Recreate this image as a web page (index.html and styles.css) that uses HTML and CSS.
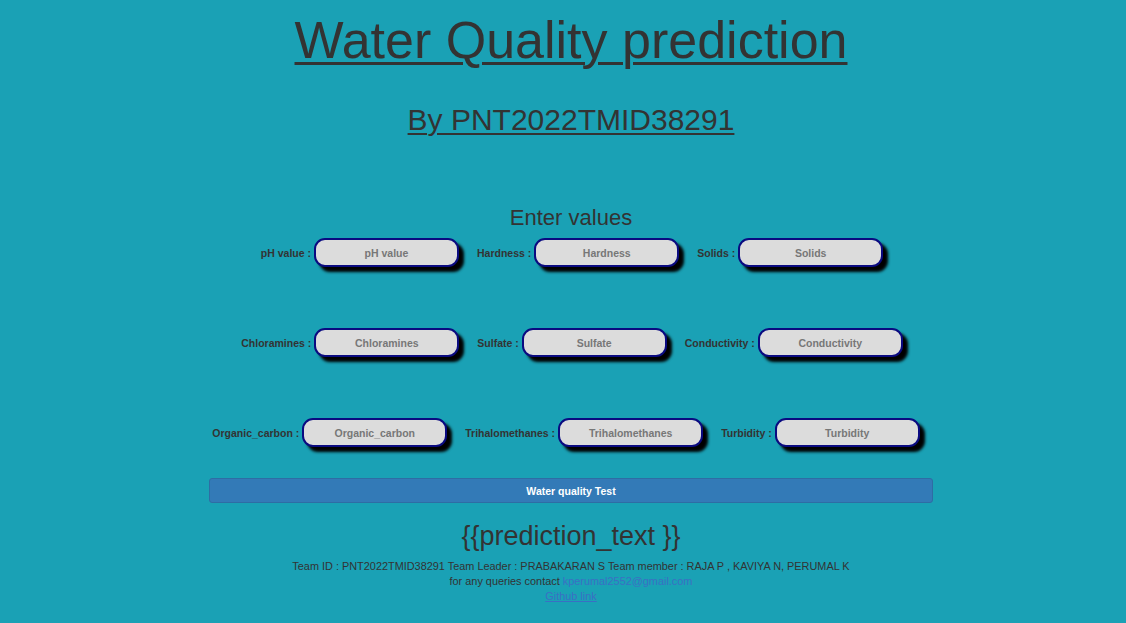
FILE: index.html
```html
<!DOCTYPE html>
<html>
<head>
<meta charset="utf-8">
<title>Water Quality prediction</title>
<link rel="stylesheet" href="styles.css">
</head>
<body>
<div class="page">
  <h1 class="title">Water Quality prediction</h1>
  <h2 class="subtitle">By PNT2022TMID38291</h2>
  <h3 class="enter">Enter values</h3>
  <form class="form">
    <div class="row">
      <label class="field"><span class="lbl">pH value :</span><input class="inp" placeholder="pH value"></label>
      <label class="field"><span class="lbl">Hardness :</span><input class="inp" placeholder="Hardness"></label>
      <label class="field"><span class="lbl">Solids :</span><input class="inp" placeholder="Solids"></label>
    </div>
    <div class="row">
      <label class="field"><span class="lbl">Chloramines :</span><input class="inp" placeholder="Chloramines"></label>
      <label class="field"><span class="lbl">Sulfate :</span><input class="inp" placeholder="Sulfate"></label>
      <label class="field"><span class="lbl">Conductivity :</span><input class="inp" placeholder="Conductivity"></label>
    </div>
    <div class="row row-last">
      <label class="field"><span class="lbl">Organic_carbon :</span><input class="inp" placeholder="Organic_carbon"></label>
      <label class="field"><span class="lbl">Trihalomethanes :</span><input class="inp" placeholder="Trihalomethanes"></label>
      <label class="field"><span class="lbl">Turbidity :</span><input class="inp" placeholder="Turbidity"></label>
    </div>
    <button type="button" class="btn">Water quality Test</button>
  </form>
  <div class="prediction">{{prediction_text }}</div>
  <div class="footer">
    <div class="fline">Team ID : PNT2022TMID38291 Team Leader : PRABAKARAN S Team member : RAJA P , KAVIYA N, PERUMAL K</div>
    <div class="fline">for any queries contact <a class="mail" href="#">kperumal2552@gmail.com</a></div>
    <div class="fline"><a class="gh" href="#">Github link</a></div>
  </div>
</div>
</body>
</html>
```
FILE: styles.css
```css
html, body {
  margin: 0;
  padding: 0;
  background: #1aa1b5;
  height: 100%;
}
body {
  font-family: "Liberation Sans", Arial, sans-serif;
  color: #333333;
  overflow: hidden;
}
.page {
  padding-left: 16px;
  display: flex;
  flex-direction: column;
  align-items: center;
  text-align: center;
}
.title {
  margin: 11px 0 0;
  font-size: 52px;
  line-height: 58px;
  font-weight: normal;
  text-decoration: underline;
  text-decoration-thickness: 3px;
  text-underline-offset: 4px;
}
.subtitle {
  margin: 34px 0 0;
  font-size: 30px;
  line-height: 34px;
  font-weight: normal;
  text-decoration: underline;
  text-decoration-thickness: 2px;
  text-underline-offset: 3px;
}
.enter {
  margin: 68px 0 0;
  font-size: 22px;
  line-height: 26px;
  font-weight: normal;
}
.form {
  margin: 7px 0 0;
  width: 724px;
  display: flex;
  flex-direction: column;
  align-items: center;
  gap: 61px;
}
.row {
  display: flex;
  justify-content: center;
  align-items: center;
  gap: 18px;
  margin-left: 2px;
}
.row-last {
  margin-left: 0;
  margin-right: 10px;
}
.field {
  display: flex;
  align-items: center;
  gap: 3px;
}
.lbl {
  font-size: 10.5px;
  font-weight: bold;
  color: #333;
}
.inp {
  box-sizing: border-box;
  width: 145px;
  height: 29px;
  border: 2px solid #0a0a80;
  border-radius: 11px;
  background: #dcdcdc;
  box-shadow: 5px 5px 3px #000;
  font-family: "Liberation Sans", Arial, sans-serif;
  font-size: 10.5px;
  font-weight: bold;
  text-align: center;
  color: #333;
  padding: 0 6px;
  outline: none;
}
.inp::placeholder {
  color: #777;
  opacity: 1;
}
.btn {
  margin-top: -30px;
  box-sizing: border-box;
  width: 724px;
  height: 25px;
  background: #337ab7;
  border: 1px solid #2e6da4;
  border-radius: 3px;
  color: #fff;
  font-family: "Liberation Sans", Arial, sans-serif;
  font-size: 10.5px;
  font-weight: bold;
  padding: 0;
}
.prediction {
  margin-top: 18px;
  font-size: 27px;
  line-height: 31px;
}
.footer {
  margin-top: 7px;
  font-size: 10.9px;
  line-height: 15px;
}
.mail, .gh {
  color: #3a6fc4;
}
.mail {
  text-decoration: none;
}
.gh {
  text-decoration: underline;
}
```
